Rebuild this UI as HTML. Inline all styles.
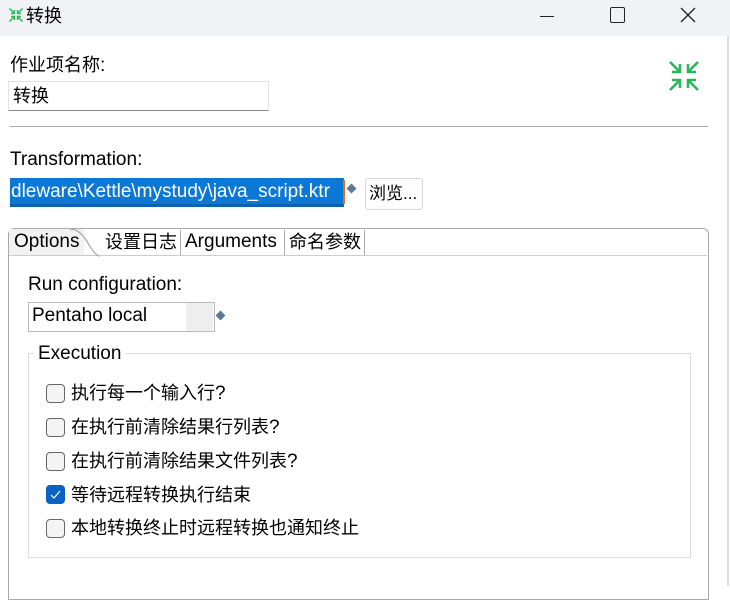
<!DOCTYPE html>
<html><head><meta charset="utf-8"><style>
body{margin:0;width:730px;height:586px;background:#fff;position:relative;overflow:hidden;font-family:"Liberation Sans","Noto Sans CJK SC",sans-serif;color:#000;font-size:18px}
.a{position:absolute;white-space:nowrap;line-height:20px}
.l{font-size:19px}
.cb{position:absolute;width:17px;height:17px;border:1px solid #666;border-radius:4px;background:#f4f4f4}
</style></head><body>
<div class="a" style="left:0;top:0;width:730px;height:36px;background:#f0f2f5"></div>
<svg class="a" style="left:8px;top:7px" width="16" height="16" viewBox="0 0 32 32" stroke="#2bb65a" stroke-width="3" fill="none"><path d="M3 3L13 13M13 6V13H6M29 3L19 13M19 6V13H26M3 29L13 19M13 26V19H6M29 29L19 19M19 26V19H26"/></svg>
<div class="a" style="left:26px;top:6px;font-size:18px">转换</div>
<div class="a" style="left:540px;top:16px;width:14px;height:1px;background:#222"></div>
<div class="a" style="left:610px;top:7px;width:13px;height:14px;border:1.5px solid #222;border-radius:2px"></div>
<svg class="a" style="left:680px;top:7px" width="16" height="16"><path d="M1 1L15 15M15 1L1 15" stroke="#222" stroke-width="1.3"/></svg>
<div class="a" style="left:727px;top:36px;width:2px;height:550px;background:#ddd"></div>
<div class="a" style="left:10px;top:55px">作业项名称<span class="l">:</span></div>
<div class="a" style="left:8px;top:81px;width:259px;height:28px;border:1px solid #e3e3e3;border-bottom:1px solid #888"></div>
<div class="a" style="left:13px;top:86px">转换</div>
<svg class="a" style="left:668px;top:60px" width="32" height="32" viewBox="0 0 32 32" stroke="#2bb65a" stroke-width="2.6" fill="none"><path d="M2 2L12 12M12 4V12H4M30 2L20 12M20 4V12H28M2 30L12 20M12 28V20H4M30 30L20 20M20 28V20H28"/></svg>
<div class="a" style="left:10px;top:126px;width:698px;height:1px;background:#aaa"></div>
<div class="a l" style="left:10px;top:150px">Transformation:</div>
<div class="a" style="left:10px;top:178px;width:334px;height:26px;background:#0b78d6;border-bottom:3px solid #0b60b0"></div>
<div class="a" style="left:343px;top:180px;width:2px;height:24px;background:#e07020"></div>
<div class="a l" style="left:11px;top:182px;color:#fff;width:332px;overflow:hidden">dleware\Kettle\mystudy\java_script.ktr</div>
<div class="a" style="left:348px;top:185px;width:7px;height:7px;background:#5c7896;transform:rotate(45deg)"></div>
<div class="a" style="left:365px;top:178px;width:56px;height:30px;border:1px solid #d8d8d8;border-radius:3px;background:#fdfdfd"></div>
<div class="a" style="left:369px;top:184px;font-size:17px">浏览...</div>
<div class="a" style="left:8px;top:228px;width:699px;height:370px;border:1px solid #aaa;border-radius:6px 6px 0 0"></div>
<div class="a" style="left:9px;top:255px;width:698px;height:1px;background:#ccc"></div>
<div class="a" style="left:9px;top:229px;width:75px;height:26px;background:#f2f2f2"></div>
<svg class="a" style="left:70px;top:229px" width="32" height="28"><path d="M0 0Q10 0 18 14T30 27" stroke="#999" fill="#f2f2f2"/></svg>
<div class="a l" style="left:14px;top:232px">Options</div>
<div class="a" style="left:105px;top:232px">设置日志</div>
<div class="a" style="left:180px;top:230px;width:1px;height:25px;background:#aaa"></div>
<div class="a l" style="left:185px;top:232px">Arguments</div>
<div class="a" style="left:284px;top:230px;width:1px;height:25px;background:#aaa"></div>
<div class="a" style="left:289px;top:232px">命名参数</div>
<div class="a" style="left:364px;top:230px;width:1px;height:25px;background:#aaa"></div>
<div class="a l" style="left:28px;top:275px">Run configuration:</div>
<div class="a" style="left:28px;top:302px;width:185px;height:28px;border:1px solid #bbb"></div>
<div class="a" style="left:186px;top:303px;width:27px;height:28px;background:#eee"></div>
<div class="a l" style="left:32px;top:306px">Pentaho local</div>
<div class="a" style="left:217px;top:312px;width:7px;height:7px;background:#5c7896;transform:rotate(45deg)"></div>
<div class="a" style="left:28px;top:353px;width:661px;height:203px;border:1px solid #ddd"></div>
<div class="a l" style="left:34px;top:344px;background:#fff;padding:0 4px">Execution</div>
<div class="cb" style="left:46px;top:384px"></div><div class="a" style="left:71px;top:383px">执行每一个输入行<span class="l">?</span></div>
<div class="cb" style="left:46px;top:418px"></div><div class="a" style="left:71px;top:417px">在执行前清除结果行列表<span class="l">?</span></div>
<div class="cb" style="left:46px;top:452px"></div><div class="a" style="left:71px;top:451px">在执行前清除结果文件列表<span class="l">?</span></div>
<div class="cb" style="left:46px;top:485px;background:#0862c4;border-color:#0862c4"></div>
<svg class="a" style="left:50px;top:489px" width="11" height="11"><path d="M1 6L4 9L10 2" stroke="#fff" stroke-width="1.2" fill="none"/></svg>
<div class="a" style="left:71px;top:485px">等待远程转换执行结束</div>
<div class="cb" style="left:46px;top:519px"></div><div class="a" style="left:71px;top:518px">本地转换终止时远程转换也通知终止</div>
</body></html>
